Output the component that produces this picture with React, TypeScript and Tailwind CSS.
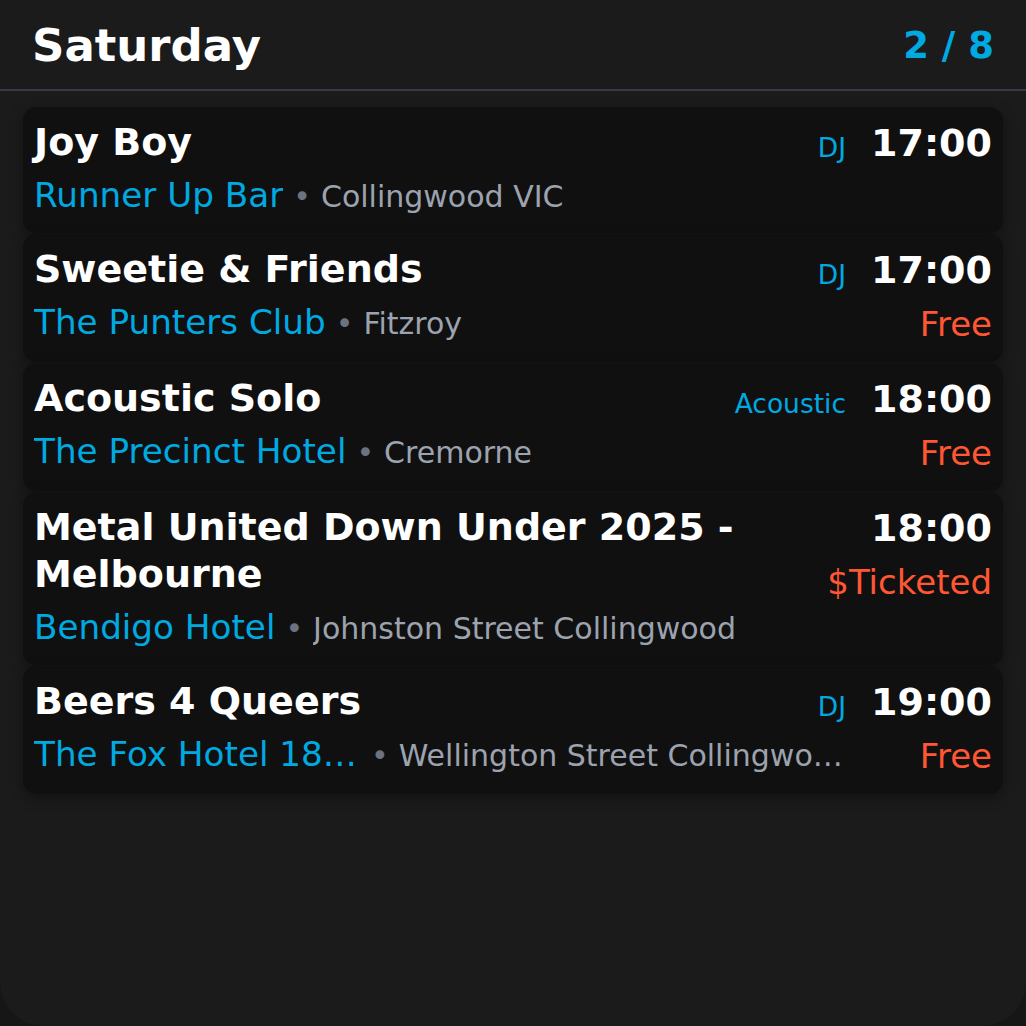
import React from 'react';

interface Gig {
  title: string;
  venue: string;
  location: string;
  time: string;
  tag?: string;
  price?: string;
}

const gigs: Gig[] = [
  { title: 'Joy Boy', venue: 'Runner Up Bar', location: 'Collingwood VIC', time: '17:00', tag: 'DJ' },
  { title: 'Sweetie & Friends', venue: 'The Punters Club', location: 'Fitzroy', time: '17:00', tag: 'DJ', price: 'Free' },
  { title: 'Acoustic Solo', venue: 'The Precinct Hotel', location: 'Cremorne', time: '18:00', tag: 'Acoustic', price: 'Free' },
  {
    title: 'Metal United Down Under 2025 - Melbourne',
    venue: 'Bendigo Hotel',
    location: 'Johnston Street Collingwood',
    time: '18:00',
    price: '$Ticketed',
  },
  {
    title: 'Beers 4 Queers',
    venue: 'The Fox Hotel 1890 Collingwood',
    location: 'Wellington Street Collingwood',
    time: '19:00',
    tag: 'DJ',
    price: 'Free',
  },
];

const GigCard: React.FC<{ gig: Gig }> = ({ gig }) => {
  return (
    <div className="flex gap-[25px] rounded-[14px] bg-[#101010] px-[11px] pt-[12px] pb-[13px] shadow-[0_4px_14px_rgba(0,0,0,0.35)]">
      {/* left: title + venue */}
      <div className="flex min-w-0 flex-1 flex-col">
        <div className="flex items-baseline gap-4">
          <div className="min-w-0 flex-1 text-[38px] font-bold leading-[47px] text-white">{gig.title}</div>
          {gig.tag && (
            <span className="relative top-[2px] shrink-0 text-[26.5px] leading-none text-[#00a9e0]">{gig.tag}</span>
          )}
        </div>
        <div className="mt-[4px] flex min-w-0 items-baseline whitespace-nowrap">
          <span className="max-w-[327px] truncate text-[34.2px] leading-[50px] text-[#00a9e0]">{gig.venue}</span>
          <span className="mx-[10px] shrink-0 text-[30px] leading-[46px] text-[#6b7280]">•</span>
          <span className="min-w-0 truncate text-[30px] leading-[46px] text-[#9ca3af]">{gig.location}</span>
        </div>
      </div>
      {/* right: time + price */}
      <div className="flex shrink-0 flex-col items-end">
        <div className="text-[38px] font-bold leading-[49px] text-white">{gig.time}</div>
        {gig.price && (
          <div className="mt-[4px] text-[34px] leading-[50px] text-[#ff5733]">{gig.price}</div>
        )}
      </div>
    </div>
  );
};

export default function App() {
  return (
    <div className="min-h-[1026px] bg-[#161616]" style={{ fontFamily: '"DejaVu Sans", Verdana, sans-serif' }}>
      <div className="flex h-[1026px] flex-col overflow-hidden rounded-b-[44px] bg-[#1b1b1b]">
        {/* header */}
        <div className="flex h-[91px] shrink-0 items-center justify-between border-b-2 border-[#363b45] px-[32px] pt-[2px]">
          <h1 className="text-[45px] font-bold text-white">Saturday</h1>
          <div className="text-[37px] font-bold text-[#00a9e0]">2 / 8</div>
        </div>
        {/* list */}
        <div className="flex flex-col gap-px px-[23px] pt-[16px]">
          {gigs.map((g) => (
            <GigCard key={g.title} gig={g} />
          ))}
        </div>
      </div>
    </div>
  );
}
